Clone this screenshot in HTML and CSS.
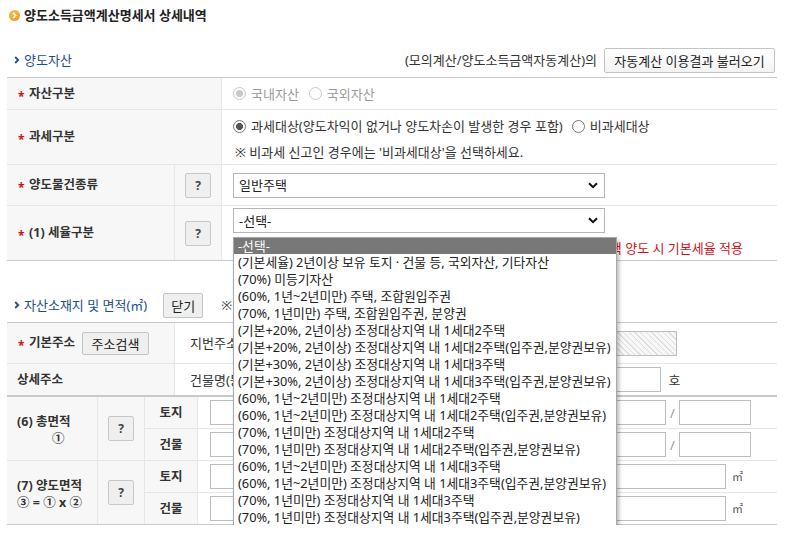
FILE: index.html
```html
<!DOCTYPE html>
<html lang="ko">
<head>
<meta charset="utf-8">
<title>양도소득금액계산명세서 상세내역</title>
<link rel="stylesheet" href="styles.css">
</head>
<body>
<div class="page">
  <h1 class="page-title"><span class="title-icon"><svg viewBox="0 0 11 11" width="11" height="11"><polyline points="4.2,3 6.6,5.5 4.2,8" fill="none" stroke="#fff" stroke-width="1.7"/></svg></span>양도소득금액계산명세서 상세내역</h1>

  <div class="sec-head first">
    <h2 class="sec-title"><svg class="chev" viewBox="0 0 6 8" width="6" height="8"><polyline points="1.2,1 4.2,4 1.2,7" fill="none" stroke="#1d4e89" stroke-width="1.8"/></svg>양도자산</h2>
    <div class="sec-tools"><span>(모의계산/양도소득금액자동계산)의</span><button class="btn btn-load">자동계산 이용결과 불러오기</button></div>
  </div>

  <div class="grid g1">
    <div class="cell th span2"><i class="req">*</i>자산구분</div>
    <div class="cell td">
      <label class="opt dis"><input class="radio" type="radio" name="a" checked disabled>국내자산</label>
      <label class="opt dis"><input class="radio" type="radio" name="a" disabled>국외자산</label>
    </div>

    <div class="cell th span2"><i class="req">*</i>과세구분</div>
    <div class="cell td col">
      <div class="line"><label class="opt"><input class="radio" type="radio" name="b" checked>과세대상(양도차익이 없거나 양도차손이 발생한 경우 포함)</label><label class="opt"><input class="radio" type="radio" name="b">비과세대상</label></div>
      <div class="line note">※ 비과세 신고인 경우에는 '비과세대상'을 선택하세요.</div>
    </div>

    <div class="cell th"><i class="req">*</i>양도물건종류</div>
    <div class="cell th q"><button class="qbtn">?</button></div>
    <div class="cell td">
      <div class="select"><span>일반주택</span><svg viewBox="0 0 10 7" width="10" height="7"><polyline points="1,1.2 5,5.2 9,1.2" fill="none" stroke="#111" stroke-width="2"/></svg></div>
    </div>

    <div class="cell th last"><i class="req">*</i>(1) 세율구분</div>
    <div class="cell th q last"><button class="qbtn">?</button></div>
    <div class="cell td col last rate">
      <div class="select-wrap">
        <div class="select"><span>-선택-</span><svg viewBox="0 0 10 7" width="10" height="7"><polyline points="1,1.2 5,5.2 9,1.2" fill="none" stroke="#111" stroke-width="2"/></svg></div>
        <ul class="dropdown">
          <li class="sel">-선택-</li>
          <li>(기본세율) 2년이상 보유 토지 · 건물 등, 국외자산, 기타자산</li>
          <li>(70%) 미등기자산</li>
          <li>(60%, 1년~2년미만) 주택, 조합원입주권</li>
          <li>(70%, 1년미만) 주택, 조합원입주권, 분양권</li>
          <li>(기본+20%, 2년이상) 조정대상지역 내 1세대2주택</li>
          <li>(기본+20%, 2년이상) 조정대상지역 내 1세대2주택(입주권,분양권보유)</li>
          <li>(기본+30%, 2년이상) 조정대상지역 내 1세대3주택</li>
          <li>(기본+30%, 2년이상) 조정대상지역 내 1세대3주택(입주권,분양권보유)</li>
          <li>(60%, 1년~2년미만) 조정대상지역 내 1세대2주택</li>
          <li>(60%, 1년~2년미만) 조정대상지역 내 1세대2주택(입주권,분양권보유)</li>
          <li>(70%, 1년미만) 조정대상지역 내 1세대2주택</li>
          <li>(70%, 1년미만) 조정대상지역 내 1세대2주택(입주권,분양권보유)</li>
          <li>(60%, 1년~2년미만) 조정대상지역 내 1세대3주택</li>
          <li>(60%, 1년~2년미만) 조정대상지역 내 1세대3주택(입주권,분양권보유)</li>
          <li>(70%, 1년미만) 조정대상지역 내 1세대3주택</li>
          <li>(70%, 1년미만) 조정대상지역 내 1세대3주택(입주권,분양권보유)</li>
        </ul>
      </div>
      <div class="warn">※ 1세대 1주택 비과세 요건을 갖춘 고가주택 양도 시 기본세율 적용</div>
    </div>
  </div>

  <div class="sec-head second">
    <h2 class="sec-title"><svg class="chev" viewBox="0 0 6 8" width="6" height="8"><polyline points="1.2,1 4.2,4 1.2,7" fill="none" stroke="#1d4e89" stroke-width="1.8"/></svg>자산소재지 및 면적(㎡)</h2>
    <button class="btn btn-close">닫기</button>
    <span class="sec-note">※ 면적은 소수점 둘째자리까지 입력</span>
  </div>

  <div class="grid g2">
    <div class="cell th"><i class="req">*</i>기본주소<button class="btn btn-addr">주소검색</button></div>
    <div class="cell td pad15">
      <span class="fld-label">지번주소</span><input class="inp hatched" type="text" readonly>
    </div>
    <div class="cell th last plain">상세주소</div>
    <div class="cell td pad15 last">
      <span class="fld-label">건물명(동)</span><input class="inp w250" type="text"><span class="unit">동</span><input class="inp w125" type="text"><span class="unit">호</span>
    </div>
  </div>

  <div class="grid g3">
    <div class="cell th plain area-label r2"><span>(6) 총면적</span><span class="ind">①</span></div>
    <div class="cell th q r2"><button class="qbtn">?</button></div>
    <div class="cell th sub">토지</div>
    <div class="cell td pad12"><input class="inp w456" type="text"><span class="slash">/</span><input class="inp w72" type="text"></div>
    <div class="cell th sub">건물</div>
    <div class="cell td pad12"><input class="inp w456" type="text"><span class="slash">/</span><input class="inp w72" type="text"></div>

    <div class="cell th plain area-label r2 last"><span>(7) 양도면적</span><span>③ = ① x ②</span></div>
    <div class="cell th q r2 last"><button class="qbtn">?</button></div>
    <div class="cell th sub">토지</div>
    <div class="cell td pad12"><input class="inp w516" type="text"><span class="m2">㎡</span></div>
    <div class="cell th sub last">건물</div>
    <div class="cell td pad12 last"><input class="inp w516" type="text"><span class="m2">㎡</span></div>
  </div>
</div>
</body>
</html>
```

FILE: styles.css
```css
* { box-sizing: border-box; }
html, body { margin: 0; padding: 0; background: #fff; }
body {
  font-family: "Noto Sans", "Noto Sans CJK KR", sans-serif;
  font-size: 13px;
  line-height: 16px;
  color: #333;
}
.page { width: 777px; padding-left: 7px; }

.page-title {
  margin: 0;
  padding: 5px 0 0 2px;
  height: 25px;
  line-height: 20px;
  font-size: 13px;
  font-weight: 700;
  color: #222;
  display: flex;
  align-items: center;
}
.title-icon {
  width: 11px; height: 11px;
  border-radius: 50%;
  background: radial-gradient(circle at 40% 35%, #fbbf55, #ee8d1c);
  display: inline-flex;
  margin-right: 4px;
}

.sec-head { display: flex; align-items: center; height: 26px; }
.sec-head.first { margin-top: 22px; margin-bottom: 4px; justify-content: space-between; padding-right: 2px; }
.sec-head.second { margin-top: 31px; margin-bottom: 4px; }
.sec-title {
  margin: 0;
  font-size: 13px;
  font-weight: 400;
  color: #1d4e89;
  display: flex;
  align-items: center;
  padding-left: 7px;
}
.chev { margin-right: 4px; }
.sec-tools { display: flex; align-items: center; }
.sec-tools span { margin-right: 7px; }
.sec-note { margin-left: 18px; color: #444; }

.btn {
  font-family: inherit;
  font-size: 13px;
  color: #222;
  border: 1px solid #c4c4c4;
  border-radius: 2px;
  padding: 0;
  cursor: pointer;
}
.btn-load { width: 171px; height: 25px; background: linear-gradient(#fff, #f3f3f3); }
.btn-close { width: 40px; height: 25px; background: #efefef; margin-left: 16px; }
.btn-addr { width: 67px; height: 23px; background: #efefef; margin-left: 7px; font-weight: 400; }

.grid {
  display: grid;
  border-top: 1px solid #c9c9c9;
  border-bottom: 1px solid #c9c9c9;
}
.g1 { grid-template-columns: 168px 47px 1fr; grid-template-rows: 32px 55px 41px 54px; }
.g2 { grid-template-columns: 168px 1fr; grid-template-rows: 41px 31px; }
.g3 { grid-template-columns: 91px 47px 53px 1fr; grid-template-rows: 32px 32px 32px 31px; }

.cell {
  border-bottom: 1px solid #e6e6e6;
  display: flex;
  align-items: center;
  min-width: 0;
}
.cell.last { border-bottom: 0; }
.th {
  background: #f7f7f7;
  border-right: 1px solid #e6e6e6;
  font-weight: 700;
  font-size: 12.5px;
  color: #333;
  padding-left: 10px;
}
.span2 { grid-column: span 2; }
.r2 { grid-row: span 2; }
.th.q { justify-content: center; padding-left: 0; }
.th.sub { justify-content: center; padding-left: 0; }
.td { padding-left: 11px; background: #fff; }
.td.col { flex-direction: column; align-items: flex-start; justify-content: flex-start; }
.pad15 { padding-left: 15px; }
.pad12 { padding-left: 12px; }

.req {
  font-style: normal;
  color: #d0121b;
  font-weight: 700;
  font-size: 12px;
  width: 12px;
  display: inline-block;
  position: relative;
  top: 3px;
  padding-left: 1px;
}

.opt { display: inline-flex; align-items: center; margin-right: 9px; color: #333; white-space: nowrap; }
.opt.dis { color: #9a9a9a; margin-right: 10px; }
.radio {
  appearance: none;
  -webkit-appearance: none;
  width: 13px; height: 13px;
  margin: 0 5px 0 0;
  border: 1px solid #757575;
  border-radius: 50%;
  background: #fff;
  flex: none;
}
.radio:checked { background: radial-gradient(circle, #555 0 3.2px, #fff 3.8px); }
.radio:disabled { border-color: #c9c9c9; }
.radio:disabled:checked { background: radial-gradient(circle, #c9c9c9 0 3.2px, #fff 3.8px); }

.g1 .td.col:not(.rate) { padding-top: 8px; }
.line { display: flex; align-items: center; height: 16px; white-space: nowrap; }
.line.note { margin-top: 10px; padding-left: 2px; }

.select {
  width: 372px; height: 25px;
  border: 1px solid #b5b5b5;
  background: #fff;
  display: flex;
  align-items: center;
  justify-content: space-between;
  padding: 0 6px 0 5px;
  color: #222;
}
.rate { padding-top: 2px; }
.select-wrap { position: relative; }
.dropdown {
  position: absolute;
  left: 0; top: 29px;
  width: 384px;
  margin: 0; padding: 0;
  list-style: none;
  background: #fff;
  border: 1px solid #a8a8a8;
  box-shadow: 2px 3px 4px rgba(0,0,0,0.28);
  z-index: 10;
  font-size: 12.8px;
  overflow: hidden;
}
.dropdown li {
  height: 17px;
  line-height: 17px;
  padding-left: 4px;
  white-space: nowrap;
  color: #222;
}
.dropdown li.sel { height: 16px; line-height: 16px; background: #787878; color: #fff; }
.warn {
  align-self: stretch;
  margin-top: 7px;
  padding-right: 34px;
  color: #d0121b;
  white-space: nowrap;
  text-align: right;
}

.fld-label { flex: none; margin-right: 12px; white-space: nowrap; }
.inp {
  height: 25px;
  border: 1px solid #bdbdbd;
  background: #fff;
  flex: none;
  padding: 0;
}
.inp.hatched {
  flex: 1 1 auto;
  width: auto;
  min-width: 0;
  margin-right: 100px;
  background: repeating-linear-gradient(45deg, #f7f7f7 0 3px, #dedede 3px 4px);
}
.w250 { width: 250px; }
.w125 { width: 125px; }
.w456 { width: 456px; }
.w72 { width: 72px; }
.w516 { width: 516px; }
.unit { margin: 0 8px; color: #333; }
.slash { width: 13px; text-align: center; color: #999; }
.m2 { margin-left: 6px; color: #555; font-size: 11px; }

.area-label {
  flex-direction: column;
  align-items: flex-start;
  justify-content: center;
  line-height: 17px;
  padding-top: 2px;
}
.ind { padding-left: 35px; }

.qbtn {
  width: 26px; height: 25px;
  background: #efefef;
  border: 1px solid #c8c8c8;
  border-radius: 2px;
  font-family: inherit;
  font-size: 12px;
  font-weight: 700;
  color: #444;
  padding: 0;
}
.g3 .sub { border-right: 1px solid #e6e6e6; }
```
